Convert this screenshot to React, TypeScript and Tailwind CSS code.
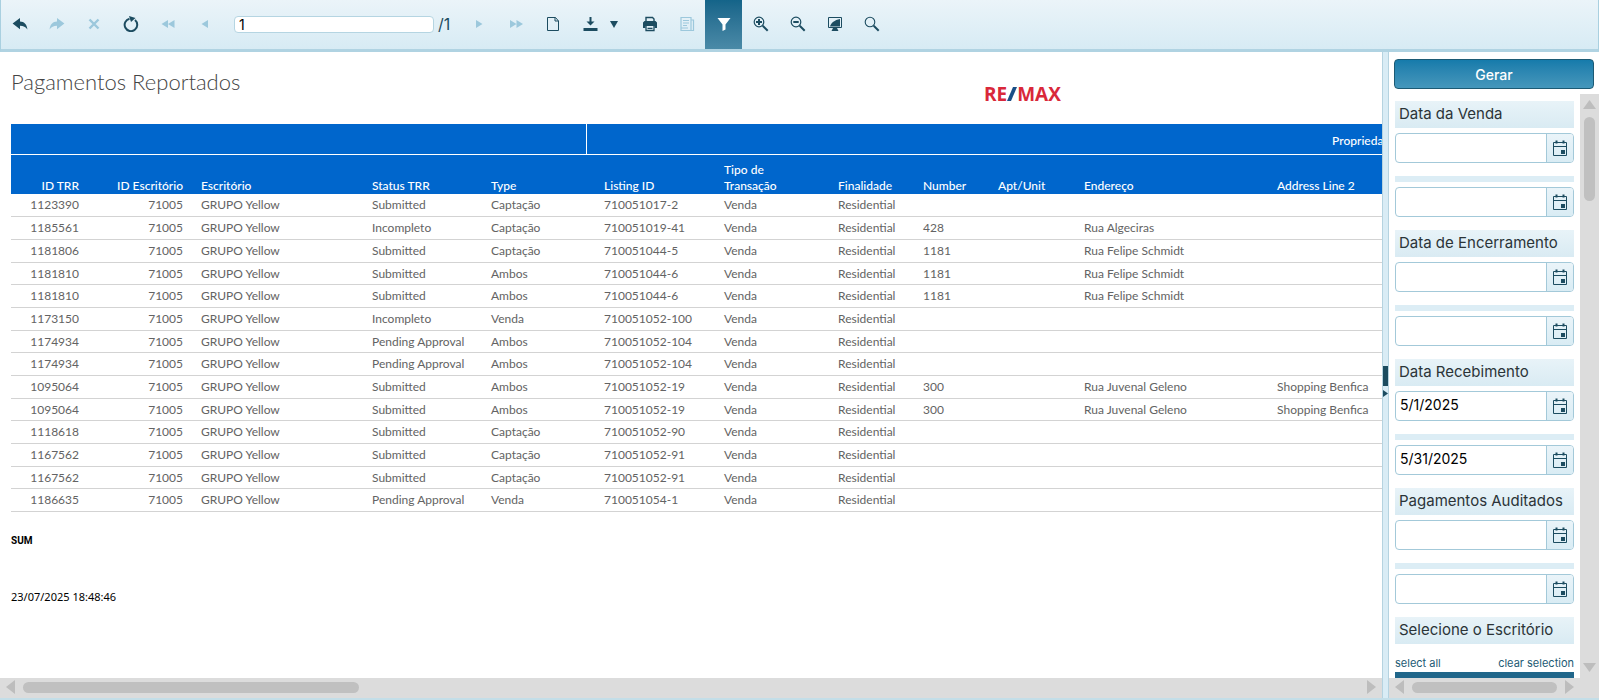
import { ReactNode, useState } from "react";
import clsx from "clsx";

interface Row {
  id: string;
  status: string;
  type: string;
  listing: string;
  number?: string;
  address?: string;
  address2?: string;
}

const rows: Row[] = [
  { id: "1123390", status: "Submitted", type: "Captação", listing: "710051017-2" },
  { id: "1185561", status: "Incompleto", type: "Captação", listing: "710051019-41", number: "428", address: "Rua Algeciras" },
  { id: "1181806", status: "Submitted", type: "Captação", listing: "710051044-5", number: "1181", address: "Rua Felipe Schmidt" },
  { id: "1181810", status: "Submitted", type: "Ambos", listing: "710051044-6", number: "1181", address: "Rua Felipe Schmidt" },
  { id: "1181810", status: "Submitted", type: "Ambos", listing: "710051044-6", number: "1181", address: "Rua Felipe Schmidt" },
  { id: "1173150", status: "Incompleto", type: "Venda", listing: "710051052-100" },
  { id: "1174934", status: "Pending Approval", type: "Ambos", listing: "710051052-104" },
  { id: "1174934", status: "Pending Approval", type: "Ambos", listing: "710051052-104" },
  { id: "1095064", status: "Submitted", type: "Ambos", listing: "710051052-19", number: "300", address: "Rua Juvenal Geleno", address2: "Shopping Benfica" },
  { id: "1095064", status: "Submitted", type: "Ambos", listing: "710051052-19", number: "300", address: "Rua Juvenal Geleno", address2: "Shopping Benfica" },
  { id: "1118618", status: "Submitted", type: "Captação", listing: "710051052-90" },
  { id: "1167562", status: "Submitted", type: "Captação", listing: "710051052-91" },
  { id: "1167562", status: "Submitted", type: "Captação", listing: "710051052-91" },
  { id: "1186635", status: "Pending Approval", type: "Venda", listing: "710051054-1" },
];

const columns = [
  { label: "ID TRR", width: "w-[68px]", right: true },
  { label: "ID Escritório", width: "w-[104px]", right: true },
  { label: "Escritório", width: "w-[171px]" },
  { label: "Status TRR", width: "w-[119px]" },
  { label: "Type", width: "w-[113px]" },
  { label: "Listing ID", width: "w-[120px]" },
  { label: "Tipo de Transação", width: "w-[114px]" },
  { label: "Finalidade", width: "w-[85px]" },
  { label: "Number", width: "w-[75px]" },
  { label: "Apt/Unit", width: "w-[86px]" },
  { label: "Endereço", width: "w-[193px]" },
  { label: "Address Line 2", width: "w-[891px]" },
];

const filters = [
  { label: "Data da Venda", from: "", to: "" },
  { label: "Data de Encerramento", from: "", to: "" },
  { label: "Data Recebimento", from: "5/1/2025", to: "5/31/2025" },
  { label: "Pagamentos Auditados", from: "", to: "" },
];

interface ToolButtonProps {
  label: string;
  children: ReactNode;
  active?: boolean;
  disabled?: boolean;
}

const ToolButton = ({ label, children, active, disabled }: ToolButtonProps) => (
  <button
    aria-label={label}
    title={label}
    disabled={disabled}
    className={clsx(
      "flex w-[37px] shrink-0 items-center justify-center self-stretch pb-px",
      active
        ? "bg-linear-to-b from-[#146489] to-[#4a8aa7] text-white"
        : disabled
          ? "text-[#9cc8dc]"
          : "text-[#1c4c60]"
    )}
  >
    <svg width="16" height="16" viewBox="0 0 16 16" fill="currentColor">
      {children}
    </svg>
  </button>
);

const Toolbar = () => (
  <header className="flex h-[52px] shrink-0 items-center border-x border-b-3 border-x-[#a9d0e0] border-b-[#b0d3e2] bg-linear-to-b from-[#ebf4f9] to-[#d7ebf4]">
    <ToolButton label="Back">
      <path d="M8 2v3.600c4.300.1 7 3 7.400 8C13.600 11 11.500 9.800 8 9.800v3.400L.600 7.600z" />
    </ToolButton>
    <ToolButton label="Forward" disabled>
      <path d="M8 2v3.600c-4.300.1-7 3-7.400 8C2.400 11 4.500 9.800 8 9.800v3.400l7.400-5.600z" />
    </ToolButton>
    <ToolButton label="Stop" disabled>
      <path d="M3.500 3.500l9 9m0-9l-9 9" stroke="currentColor" strokeWidth="2.400" />
    </ToolButton>
    <ToolButton label="Refresh">
      <path d="M12 4A6.300 6.300 0 1 1 6.500 2.700" fill="none" stroke="currentColor" strokeWidth="2" />
      <path d="M6 0l6.500 2L8 6z" />
    </ToolButton>
    <ToolButton label="First page" disabled>
      <path d="M8 4v8L1.500 8zm6.500 0v8L8 8z" />
    </ToolButton>
    <ToolButton label="Previous page" disabled>
      <path d="M11 4v8L4.500 8z" />
    </ToolButton>
    <input
      aria-label="Page"
      defaultValue="1"
      className="ml-[11px] h-[17px] w-[200px] rounded-sm border border-[#b5d5e2] bg-white px-1 font-[Inter,sans-serif] text-[14px] text-black outline-none"
    />
    <span className="w-[26px] pb-px pl-1 font-[Inter,sans-serif] text-[16px] text-[#1c4c60]">/1</span>
    <ToolButton label="Next page" disabled>
      <path d="M5 4v8l6.500-4z" />
    </ToolButton>
    <ToolButton label="Last page" disabled>
      <path d="M2 4v8l6.500-4zm6.500 0v8L15 8z" />
    </ToolButton>
    <ToolButton label="Page layout">
      <path d="M2.500 1.500h8l3 3.500v9.500h-11zM10 1.500V5h3.500" fill="none" stroke="currentColor" />
    </ToolButton>
    <button
      aria-label="Export"
      title="Export"
      className="flex w-[60px] shrink-0 items-center gap-3 self-stretch pb-px pl-3 text-[#1c4c60]"
    >
      <svg width="15" height="16" viewBox="0 0 15 16" fill="currentColor">
        <path d="M6.500 1h2v4.500h3L7.500 9.500l-4-4h3zM.500 12h14v3H.500z" />
      </svg>
      <svg width="8" height="7" viewBox="0 0 8 7" fill="currentColor">
        <path d="M0 0h8L4 7z" />
      </svg>
    </button>
    <ToolButton label="Print">
      <path d="M4 5.500v-4h6.500l1.500 1.500v2.500" fill="none" stroke="currentColor" strokeWidth="1.400" />
      <path d="M2.500 5h11L15 6.500V12h-2.500v-2h-9v2H1V6.500z" />
      <path d="M4 10v4.500h8V10M5.500 12.300h5" fill="none" stroke="currentColor" strokeWidth="1.300" />
    </ToolButton>
    <ToolButton label="Print preview" disabled>
      <path d="M2 1.500h10v13H2zM12 4h2.500v10.500H12M4 4.500h6M4 7h6M4 9.500h4M2 12h7" fill="none" stroke="currentColor" strokeWidth="1.200" />
    </ToolButton>
    <ToolButton label="Parameters" active>
      <path d="M1.500 2h13L9.500 8.500v5L6.500 15V8.500z" />
    </ToolButton>
    <ToolButton label="Zoom in">
      <circle cx="6" cy="6" r="4.800" fill="none" stroke="currentColor" strokeWidth="1.200" />
      <path d="M9.700 9.700l5 5" stroke="currentColor" strokeWidth="2" />
      <path d="M6 3v6M3 6h6" stroke="currentColor" strokeWidth="2" />
    </ToolButton>
    <ToolButton label="Zoom out">
      <circle cx="6" cy="6" r="4.800" fill="none" stroke="currentColor" strokeWidth="1.200" />
      <path d="M9.700 9.700l5 5M3.300 6h5.400" stroke="currentColor" strokeWidth="2" />
    </ToolButton>
    <ToolButton label="Full page">
      <path d="M1.500 1.500h13v10h-13z" fill="none" stroke="currentColor" />
      <path d="M3 10.500C4 7 7.500 4 13 3v7.500zM6 12h4l1.500 3h-7z" />
    </ToolButton>
    <ToolButton label="Search">
      <circle cx="6" cy="6" r="4.800" fill="none" stroke="currentColor" strokeWidth="1.100" />
      <path d="M9.700 9.700l5 5" stroke="currentColor" strokeWidth="2" />
    </ToolButton>
  </header>
);

const Logo = () => (
  <div className="flex items-center font-['Open_Sans',sans-serif] text-[19px] leading-5 font-bold text-[#d9283a]">
    <span>RE</span>
    <svg width="10" height="14" viewBox="0 0 10 14" fill="#1a4f86">
      <path d="M6 0h4L4 14H0z" />
    </svg>
    <span>MAX</span>
  </div>
);

const ReportTable = () => (
  <table className="w-full table-fixed border-collapse text-[12px] leading-4 text-[#636363]">
    <colgroup>
      {columns.map((col) => (
        <col key={col.label} className={col.width} />
      ))}
    </colgroup>
    <thead className="bg-[#0066cc] text-white">
      <tr className="h-[30px] border-b border-white">
        <th colSpan={5} className="border-r border-white" />
        <th colSpan={7} className="pt-1 pr-2 text-center font-medium">
          Propriedade
        </th>
      </tr>
      <tr className="h-[40px]">
        {columns.map((col) => (
          <th
            key={col.label}
            scope="col"
            className={clsx(
              "align-bottom font-medium",
              col.right ? "text-right" : "pr-4 pl-[18px] text-left"
            )}
          >
            {col.label}
          </th>
        ))}
      </tr>
    </thead>
    <tbody>
      {rows.map((row, index) => (
        <tr
          key={index}
          className="h-[23px] border-b border-[#d3d3d3] nth-[3n+1]:h-[22px] [&>td]:pt-px [&>td]:whitespace-nowrap"
        >
          <td className="text-right">{row.id}</td>
          <td className="text-right">71005</td>
          <td className="pl-[18px]">GRUPO Yellow</td>
          <td className="pl-[18px]">{row.status}</td>
          <td className="pl-[18px]">{row.type}</td>
          <td className="pl-[18px]">{row.listing}</td>
          <td className="pl-[18px]">Venda</td>
          <td className="pl-[18px]">Residential</td>
          <td className="pl-[18px]">{row.number}</td>
          <td className="pl-[18px]" />
          <td className="pl-[18px]">{row.address}</td>
          <td className="pl-[18px]">{row.address2}</td>
        </tr>
      ))}
    </tbody>
  </table>
);

const HorizontalScrollbar = ({ thumb }: { thumb: string }) => (
  <div className="flex h-5 shrink-0 items-center gap-2 bg-[#dcdcdc] px-[6px] pb-[2px] text-[#bdbdbd]">
    <button aria-label="Scroll left">
      <svg width="9" height="14" viewBox="0 0 9 14" fill="currentColor">
        <path d="M9 0v14L0 7z" />
      </svg>
    </button>
    <div className="flex-1">
      <div className={clsx("h-[11px] rounded-full bg-[#c0c0c0]", thumb)} />
    </div>
    <button aria-label="Scroll right">
      <svg width="9" height="14" viewBox="0 0 9 14" fill="currentColor">
        <path d="M0 0v14l9-7z" />
      </svg>
    </button>
  </div>
);

const VerticalScrollbar = () => (
  <div className="flex w-[19px] shrink-0 flex-col items-center gap-2 bg-[#dcdcdc] py-[6px] text-[#bdbdbd]">
    <button aria-label="Scroll up">
      <svg width="13" height="9" viewBox="0 0 13 9" fill="currentColor">
        <path d="M0 9h13L6.500 0z" />
      </svg>
    </button>
    <div className="flex-1">
      <div className="h-[84px] w-[11px] rounded-full bg-[#c0c0c0]" />
    </div>
    <button aria-label="Scroll down">
      <svg width="13" height="9" viewBox="0 0 13 9" fill="currentColor">
        <path d="M0 0h13L6.500 9z" />
      </svg>
    </button>
  </div>
);

interface DateFieldProps {
  label: string;
  value: string;
}

const DateField = ({ label, value: initial }: DateFieldProps) => {
  const [value, setValue] = useState<string>(initial);

  return (
    <div className="mt-[5px] mb-[13px] flex h-[30px] overflow-hidden rounded border border-[#a3c9d9] bg-white">
      <input
        aria-label={label}
        value={value}
        onChange={(e) => setValue(e.target.value)}
        className="min-w-0 flex-1 px-1 pb-1 text-[14px] text-black outline-none"
      />
      <button
        aria-label={`${label}: calendar`}
        className="flex w-[27px] items-center justify-center border-l border-[#a3c9d9] bg-linear-to-b from-[#eaf4f9] to-[#d9ecf4] text-[#1c4c60]"
      >
        <svg width="16" height="16" viewBox="0 0 16 16" fill="none" stroke="currentColor">
          <path d="M1.500 2.500h13v13h-13zM1.500 6.500h13" />
          <path d="M4.500.500v3M11.500.500v3" strokeWidth="2" />
          <path d="M9 10h4v4H9z" fill="currentColor" stroke="none" />
        </svg>
      </button>
    </div>
  );
};

const FilterHeading = ({ children }: { children: ReactNode }) => (
  <h2 className="h-[27px] bg-linear-to-b from-[#e8f3f8] to-[#d9ebf3] pl-1 text-[15px] leading-[26px] text-[#2b3438]">
    {children}
  </h2>
);

const FilterPanel = () => (
  <aside className="flex w-[210px] shrink-0 flex-col font-[Inter,sans-serif]">
    <button className="mx-[5px] mt-[7px] mb-[5px] h-[30px] shrink-0 rounded border border-[#1c5a74] bg-linear-to-b from-[#157bab] to-[#4597bb] text-[14px] font-medium text-white">
      Gerar
    </button>
    <div className="flex min-h-0 flex-1">
      <div className="min-w-0 flex-1 overflow-hidden px-[6px] pt-[7px]">
        {filters.map((filter) => (
          <section key={filter.label}>
            <FilterHeading>{filter.label}</FilterHeading>
            <DateField label={`${filter.label} (from)`} value={filter.from} />
            <div className="h-[6px] bg-[#dcedf5]" />
            <DateField label={`${filter.label} (to)`} value={filter.to} />
          </section>
        ))}
        <FilterHeading>Selecione o Escritório</FilterHeading>
        <div className="mt-[10px] flex justify-between text-[11px] leading-[18px] text-[#1c5a74]">
          <a href="#select-all">select all</a>
          <a href="#clear-selection">clear selection</a>
        </div>
        <div className="h-6 bg-[#20668a]" />
      </div>
      <VerticalScrollbar />
    </div>
    <div className="flex shrink-0 bg-[#dcdcdc]">
      <div className="min-w-0 flex-1">
        <HorizontalScrollbar thumb="w-full" />
      </div>
      <div className="w-[19px]" />
    </div>
  </aside>
);

const App = () => {
  return (
    <div className="flex h-screen flex-col bg-white">
      <Toolbar />
      <div className="flex min-h-0 flex-1 border-b-2 border-[#c3dee8]">
        <main className="flex min-w-0 flex-1 flex-col font-[Lato,sans-serif]">
          <div className="min-h-0 flex-1 overflow-hidden pl-[11px]">
            <div className="w-[2139px]">
              <div className="flex h-[72px] pt-4">
                <h1 className="w-[973px] text-[22px] leading-7 font-light text-[#444]">
                  Pagamentos Reportados
                </h1>
                <div className="pt-4">
                  <Logo />
                </div>
              </div>
              <ReportTable />
              <p className="mt-[23px] font-[Roboto,sans-serif] text-[10px] leading-3 font-bold text-black">
                SUM
              </p>
              <p className="mt-[42px] font-['Noto_Sans',sans-serif] text-[11px] leading-4 text-black">
                23/07/2025 18:48:46
              </p>
            </div>
          </div>
          <HorizontalScrollbar thumb="w-[336px]" />
        </main>
        {/* Splitter between the report and the parameters */}
        <div className="flex w-[7px] shrink-0 flex-col items-center justify-center gap-1 border-x border-[#b5d3e0] bg-[#d9ecf5] pt-3 text-[#1c4c60]">
          <div className="h-5 w-[5px] bg-[#1c4c60]" />
          <button aria-label="Collapse parameters">
            <svg width="5" height="7" viewBox="0 0 5 7" fill="currentColor">
              <path d="M0 0v7l5-3.500z" />
            </svg>
          </button>
        </div>
        <FilterPanel />
      </div>
    </div>
  );
};

export default App;
